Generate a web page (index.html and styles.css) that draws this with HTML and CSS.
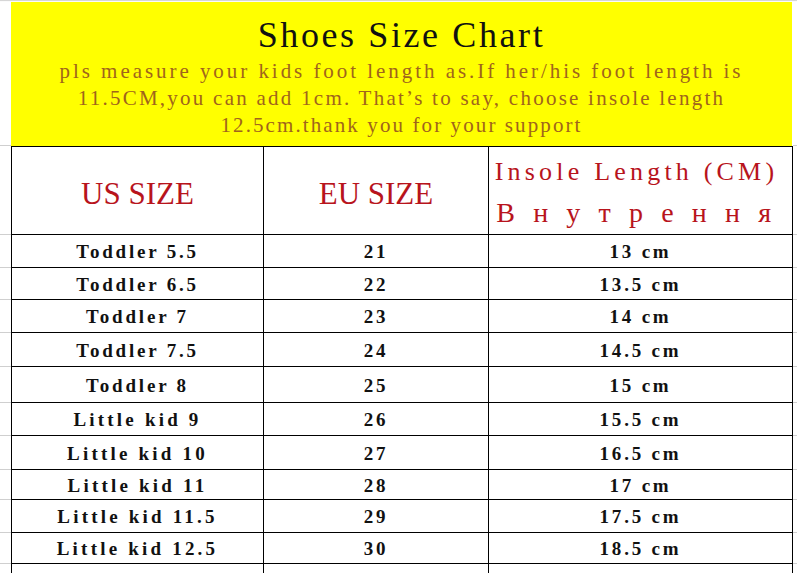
FILE: index.html
```html
<!DOCTYPE html>
<html>
<head>
<meta charset="utf-8">
<link rel="stylesheet" href="styles.css">
</head>
<body>
<div class="sheet">
  <div class="strip"></div>

  <div class="gut gut-band"></div>
  <div class="band">
    <div class="title">Shoes Size Chart</div>
    <div class="note">
      <span class="line l1">pls measure your kids foot length as.If her/his foot length is</span>
      <span class="line l2">11.5CM,you can add 1cm. That’s to say, choose insole length</span>
      <span class="line l3">12.5cm.thank you for your support</span>
    </div>
  </div>
  <div class="gut gut-band"></div>

  <div class="gut"></div>
  <div class="cell head first"><span class="htxt">US SIZE</span></div>
  <div class="cell head"><span class="htxt">EU SIZE</span></div>
  <div class="cell head insole"><span class="ins1">Insole Length (CM)</span><span class="ins2">В н у т р е н н я</span></div>
  <div class="gut"></div>

  <div class="gut"></div><div class="cell first">Toddler 5.5</div><div class="cell">21</div><div class="cell">13 cm</div><div class="gut"></div>
  <div class="gut"></div><div class="cell first">Toddler 6.5</div><div class="cell">22</div><div class="cell">13.5 cm</div><div class="gut"></div>
  <div class="gut"></div><div class="cell first">Toddler 7</div><div class="cell">23</div><div class="cell">14 cm</div><div class="gut"></div>
  <div class="gut"></div><div class="cell first">Toddler 7.5</div><div class="cell">24</div><div class="cell">14.5 cm</div><div class="gut"></div>
  <div class="gut"></div><div class="cell first">Toddler 8</div><div class="cell">25</div><div class="cell">15 cm</div><div class="gut"></div>
  <div class="gut"></div><div class="cell first wide">Little kid 9</div><div class="cell">26</div><div class="cell">15.5 cm</div><div class="gut"></div>
  <div class="gut"></div><div class="cell first wide">Little kid 10</div><div class="cell">27</div><div class="cell">16.5 cm</div><div class="gut"></div>
  <div class="gut"></div><div class="cell first wide">Little kid 11</div><div class="cell">28</div><div class="cell">17 cm</div><div class="gut"></div>
  <div class="gut"></div><div class="cell first wide">Little kid 11.5</div><div class="cell">29</div><div class="cell">17.5 cm</div><div class="gut"></div>
  <div class="gut"></div><div class="cell first wide">Little kid 12.5</div><div class="cell">30</div><div class="cell">18.5 cm</div><div class="gut"></div>
  <div class="gut"></div><div class="cell first"></div><div class="cell"></div><div class="cell"></div><div class="gut"></div>
</div>
</body>
</html>
```

FILE: styles.css
```css
* { box-sizing: border-box; }
html, body { margin: 0; padding: 0; background: #ffffff; }
body { overflow: hidden; width: 797px; height: 573px; }

.sheet {
  display: grid;
  grid-template-columns: 11px 253px 225px 304px 4px;
  grid-template-rows: 2px 144px 89px 33px 32px 33px 34px 36px 33px 34px 30px 33px 31px 20px;
  font-family: "Liberation Serif", "Times New Roman", serif;
}

.strip {
  grid-column: 1 / 6;
  border-top: 1px solid #d6d6d6;
  background: #fbfbfb;
}

.gut {
  border-bottom: 1px solid #cfcfcf;
  background: #ffffff;
}

.band {
  grid-column: 2 / 5;
  background: #ffff00;
  display: flex;
  flex-direction: column;
  align-items: center;
  padding-top: 13px;
  margin-right: 1px;
  text-align: center;
}
.title {
  font-size: 36px;
  line-height: 40px;
  letter-spacing: 2.6px;
  color: #111111;
  margin-bottom: 3px;
  white-space: nowrap;
}
.note {
  display: flex;
  flex-direction: column;
  align-items: center;
  font-size: 21px;
  line-height: 27px;
  color: #a0641c;
  white-space: nowrap;
}
.line { display: block; }
.l1 { letter-spacing: 2.95px; }
.l2 { letter-spacing: 2.25px; }
.l3 { letter-spacing: 2.1px; }

.cell {
  border-right: 1px solid #000;
  border-bottom: 1px solid #000;
  display: flex;
  align-items: center;
  justify-content: center;
  font-weight: bold;
  font-size: 19px;
  letter-spacing: 2.8px;
  color: #111;
  padding-top: 2px;
  white-space: nowrap;
}
.first { border-left: 1px solid #000; }
.wide { letter-spacing: 3.2px; }

.head {
  border-top: 1px solid #000;
  font-weight: normal;
  color: #b8141c;
  letter-spacing: 0;
}
.htxt {
  font-size: 31px;
  line-height: 34px;
  padding-top: 5px;
}
.insole {
  flex-direction: column;
  padding-top: 0;
  padding-right: 8px;
}
.ins1 {
  font-size: 26px;
  line-height: 41px;
  letter-spacing: 4.2px;
  margin-top: 2px;
}
.ins2 {
  font-size: 28px;
  line-height: 41px;
  letter-spacing: 5.6px;
}
```
